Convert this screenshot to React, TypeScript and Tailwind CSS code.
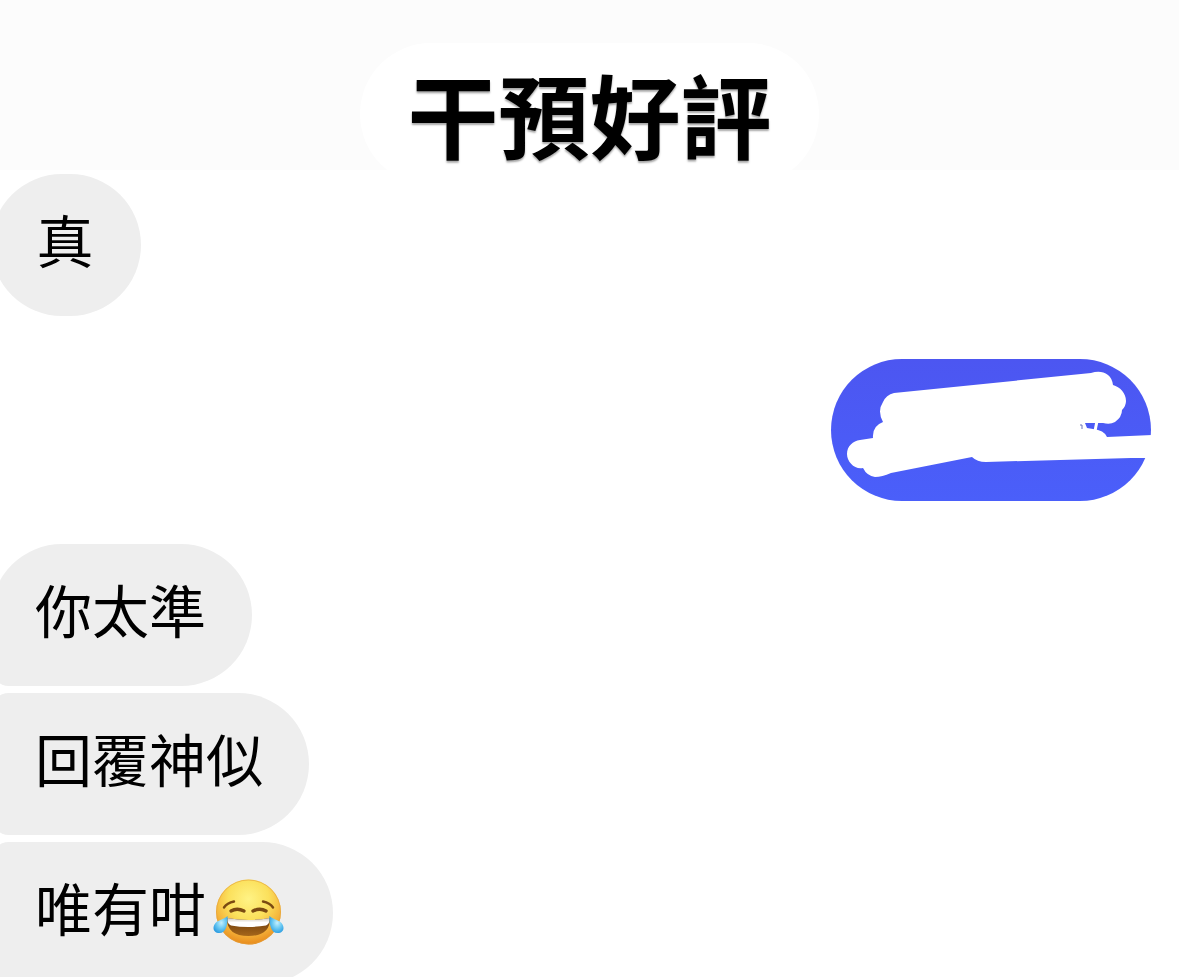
import type { ReactNode } from "react";

function JoyFace() {
  return (
    <svg role="img" aria-label="😂" viewBox="0 0 71 66" className="ml-[7px] mr-[3px] mt-[11px] h-[66px] w-[71px] shrink-0">
      <defs>
        <radialGradient id="face" cx="0.5" cy="0.3" r="0.7">
          <stop offset="0" stopColor="#fff385" />
          <stop offset="0.45" stopColor="#fbe05c" />
          <stop offset="0.75" stopColor="#f5b63c" />
          <stop offset="1" stopColor="#e88a1c" />
        </radialGradient>
        <linearGradient id="mouth" x1="0" y1="0" x2="0" y2="1">
          <stop offset="0" stopColor="#6a3a0c" />
          <stop offset="1" stopColor="#a5661a" />
        </linearGradient>
        <linearGradient id="teeth" x1="0" y1="0" x2="0" y2="1">
          <stop offset="0" stopColor="#cfc6b8" />
          <stop offset="0.5" stopColor="#ffffff" />
        </linearGradient>
        <radialGradient id="tear" cx="0.55" cy="0.4" r="0.65">
          <stop offset="0" stopColor="#c4effd" />
          <stop offset="0.5" stopColor="#6ccaf3" />
          <stop offset="1" stopColor="#2a9be0" />
        </radialGradient>
      </defs>
      <circle cx="35.5" cy="33" r="32.5" fill="url(#face)" />
      <circle cx="35.5" cy="33" r="32" fill="none" stroke="#e3a03a" strokeOpacity="0.6" />
      <g fill="none" stroke="#7a4a12" strokeLinecap="round">
        <path d="M11 28.5 Q14 24 21 22.5" strokeWidth="2.4" />
        <path d="M50 22.5 Q57 24 60 28.5" strokeWidth="2.4" />
        <path d="M18 32 Q24 28.5 31 32" strokeWidth="3.4" />
        <path d="M40 32 Q47 28.5 53 32" strokeWidth="3.4" />
      </g>
      <path d="M14 39 Q35.5 43 57 39 Q57.5 57 35.5 57 Q13.5 57 14 39Z" fill="url(#mouth)" />
      <path d="M14.5 39 Q35.5 43 56.5 39 Q57 45 53 46.5 Q35.5 49.5 18 46.5 Q14 45 14.5 39Z" fill="url(#teeth)" />
      <path d="M14.5 37 C15 42 14 54 6.5 54 C0 54 -1 48 2.5 44 C6 40.5 11 40.5 14.5 37Z" fill="url(#tear)" />
      <path d="M56.5 37 C56 42 57 54 64.5 54 C71 54 72 48 68.5 44 C65 40.5 60 40.5 56.5 37Z" fill="url(#tear)" />
    </svg>
  );
}

function Scribble() {
  return (
    <svg aria-hidden="true" viewBox="0 0 321 142" className="absolute left-0 top-0 h-[142px] w-[321px]">
      <path
        fill="#ffffff"
        d="M63 34 L260 14 C266 12 272 12 277 16 Q281 19 282 26 C289 28 295 34 295 42 Q295 47 291 51 Q291 58 284 63 Q279 66 272 64 V64 H254 L256 69 L262 70 Q273 71 276 78 L321 76 V99 H300 L155 103 Q146 103 141 98 L60 114 Q51 118 44 118 Q36 117 32 109 C24 111 16 103 16 95 C16 87 22 82 29 81 L42 79 Q41 67 52 63 Q46 52 52 43 Q55 36 63 34Z"
      />
      <path d="M266 62 L264 72" stroke="#ffffff" strokeWidth="3" fill="none" />
      <path d="M249 66 H251 V70" stroke="#6b74b8" strokeWidth="1" fill="none" />
    </svg>
  );
}

function Incoming({ shape, children }: { shape: string; children: ReactNode }) {
  return (
    <li
      className={`flex h-[142px] min-w-[150px] items-center justify-center bg-[#eeeeee] pb-[14px] pl-11 pr-[46px] text-[57px] leading-none text-black ${shape}`}
    >
      {children}
    </li>
  );
}

export default function App() {
  return (
    <div className="h-screen overflow-hidden bg-white font-['Noto_Sans_CJK_TC','Noto_Sans_CJK_JP',sans-serif]">
      <header className="flex h-[170px] justify-center bg-[#fcfcfc] pt-[43px]">
        <div className="flex h-[142px] items-center rounded-[71px] bg-white px-[47px] pb-1">
          <h1 className="text-[91px] font-bold leading-none text-black [text-shadow:0_2px_2px_rgb(0_0_0/0.35)]">
            干預好評
          </h1>
        </div>
      </header>
      <main className="-ml-[9px] pt-1">
        <ul className="flex flex-col items-start">
          <Incoming shape="rounded-[71px]">真</Incoming>
          <li className="relative mr-7 mt-[43px] h-[142px] w-[320px] self-end rounded-[71px] bg-linear-to-b from-[#4c56f1] to-[#4a5ffa]">
            <Scribble />
          </li>
          <Incoming shape="mt-[43px] rounded-[71px] rounded-bl-[18px]">你太準</Incoming>
          <Incoming shape="mt-[7px] rounded-[71px] rounded-l-[18px]">回覆神似</Incoming>
          <Incoming shape="mt-[7px] rounded-[71px] rounded-l-[18px]">
            唯有咁
            <JoyFace />
          </Incoming>
        </ul>
      </main>
    </div>
  );
}
